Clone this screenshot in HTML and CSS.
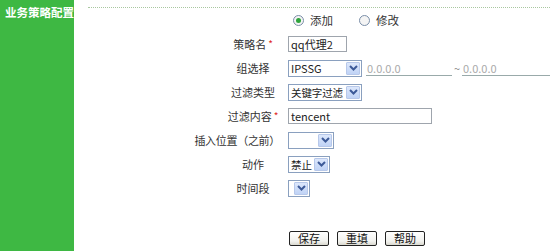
FILE: index.html
```html
<!DOCTYPE html>
<html>
<head>
<meta charset="utf-8">
<link rel="stylesheet" href="styles.css">
</head>
<body>
<div class="page">
  <aside class="side"><div class="side-title">业务策略配置</div></aside>
  <main class="main">
    <div class="rule"></div>
    <div class="form">
      <div class="label"></div>
      <div class="ctrl radios">
        <span class="radio checked"></span><span class="rtext">添加</span>
        <span class="radio second"></span><span class="rtext">修改</span>
      </div>

      <div class="label">策略名<span class="req">*</span></div>
      <div class="ctrl"><span class="input w59">qq代理2</span></div>

      <div class="label">组选择</div>
      <div class="ctrl">
        <span class="select w74"><span class="val">IPSSG</span><span class="btn"><svg width="9" height="6" viewBox="0 0 9 6"><path d="M1 1 L4.5 4.5 L8 1" fill="none" stroke="#3d5a98" stroke-width="2"/></svg></span></span>
        <span class="ip ip1">0.0.0.0</span><span class="tilde">~</span><span class="ip ip2">0.0.0.0</span>
      </div>

      <div class="label">过滤类型</div>
      <div class="ctrl"><span class="select w74"><span class="val cjk">关键字过滤</span><span class="btn"><svg width="9" height="6" viewBox="0 0 9 6"><path d="M1 1 L4.5 4.5 L8 1" fill="none" stroke="#3d5a98" stroke-width="2"/></svg></span></span></div>

      <div class="label">过滤内容<span class="req">*</span></div>
      <div class="ctrl"><span class="input w144">tencent</span></div>

      <div class="label long">插入位置（之前）</div>
      <div class="ctrl"><span class="select w46"><span class="val"></span><span class="btn"><svg width="9" height="6" viewBox="0 0 9 6"><path d="M1 1 L4.5 4.5 L8 1" fill="none" stroke="#3d5a98" stroke-width="2"/></svg></span></span></div>

      <div class="label">动作</div>
      <div class="ctrl"><span class="select w42"><span class="val cjk">禁止</span><span class="btn"><svg width="9" height="6" viewBox="0 0 9 6"><path d="M1 1 L4.5 4.5 L8 1" fill="none" stroke="#3d5a98" stroke-width="2"/></svg></span></span></div>

      <div class="label">时间段</div>
      <div class="ctrl"><span class="select w22"><span class="val"></span><span class="btn"><svg width="9" height="6" viewBox="0 0 9 6"><path d="M1 1 L4.5 4.5 L8 1" fill="none" stroke="#3d5a98" stroke-width="2"/></svg></span></span></div>
    </div>
    <div class="buttons">
      <button class="b">保存</button>
      <button class="b">重填</button>
      <button class="b">帮助</button>
    </div>
  </main>
</div>
</body>
</html>
```

FILE: styles.css
```css
html, body {
  margin: 0;
  padding: 0;
  background: #fff;
}
body {
  font-family: "Noto Sans CJK SC", "DejaVu Sans", sans-serif;
  font-size: 11px;
  color: #333;
}
.page {
  display: flex;
  width: 553px;
  height: 251px;
  overflow: hidden;
}
.side {
  width: 74px;
  flex: none;
  background: #3eb843;
}
.side-title {
  color: #fff;
  font-weight: bold;
  font-size: 11.5px;
  line-height: 14px;
  padding: 5px 0 0 5px;
  white-space: nowrap;
}
.main {
  flex: 1;
  padding: 7px 5px 0 14px;
}
.rule {
  border-top: 1px dotted #a9c7a0;
  height: 0;
}
.form {
  display: grid;
  grid-template-columns: 70px 1fr;
  grid-auto-rows: 24px;
  margin-left: 130px;
}
.label {
  display: flex;
  align-items: center;
  justify-content: center;
  white-space: nowrap;
  line-height: 14px;
}
.label.long {
  justify-content: flex-end;
  padding-right: 8px;
  letter-spacing: -0.3px;
}
.req {
  color: #e0281e;
  font-size: 10px;
  margin-left: 2px;
}
.ctrl {
  display: flex;
  align-items: center;
  white-space: nowrap;
}
.radios .radio {
  width: 9px;
  height: 9px;
  border: 1px solid #7a8ea8;
  border-radius: 50%;
  background: #f4f4f4;
  position: relative;
  margin-left: 5px;
}
.radios .radio.second {
  margin-left: 26px;
}
.radios .radio.checked::after {
  content: "";
  position: absolute;
  left: 2px;
  top: 2px;
  width: 5px;
  height: 5px;
  border-radius: 50%;
  background: #2ea43c;
}
.rtext {
  margin-left: 6px;
  font-size: 11.5px;
}
.input {
  box-sizing: border-box;
  height: 16px;
  border: 1px solid #9fa5ad;
  padding: 0 2px;
  line-height: 14px;
  color: #222;
  font-size: 11px;
}
.w59 { width: 59px; }
.w144 { width: 144px; }
.select {
  box-sizing: border-box;
  height: 17px;
  border: 1px solid #8aa0bf;
  display: flex;
  align-items: center;
  padding: 1px;
  background: #fff;
}
.w74 { width: 74px; }
.w46 { width: 46px; }
.w42 { width: 42px; }
.w22 { width: 22px; }
.select .val {
  flex: 1;
  padding-left: 1px;
  line-height: 13px;
  color: #222;
  overflow: visible;
  min-width: 0;
}
.select .val.cjk {
  font-size: 10.5px;
  letter-spacing: -0.1px;
}
.select .btn {
  width: 14px;
  height: 13px;
  flex: none;
  box-sizing: border-box;
  border: 1px solid #b7c8ea;
  background: linear-gradient(#dce7fb, #c0d3f6);
  border-radius: 1px;
  display: flex;
  align-items: center;
  justify-content: center;
}
.ip {
  box-sizing: border-box;
  height: 15px;
  border-bottom: 1px solid #9aa;
  color: #aaa;
  line-height: 14px;
  padding-left: 1px;
}
.ip1 {
  width: 86px;
  margin-left: 4px;
}
.ip2 {
  width: 88px;
}
.tilde {
  color: #888;
  width: 10px;
  text-align: center;
}
.buttons {
  display: flex;
  gap: 8px;
  margin: 31px 0 0 201px;
}
.b {
  box-sizing: border-box;
  width: 40px;
  height: 15px;
  padding: 0;
  border: 1px solid #222;
  border-radius: 2px;
  background: linear-gradient(#ffffff, #f2f2ee 70%, #d9d8cf);
  font-family: "Noto Sans CJK SC", sans-serif;
  font-size: 11px;
  line-height: 13px;
  color: #111;
}
```
